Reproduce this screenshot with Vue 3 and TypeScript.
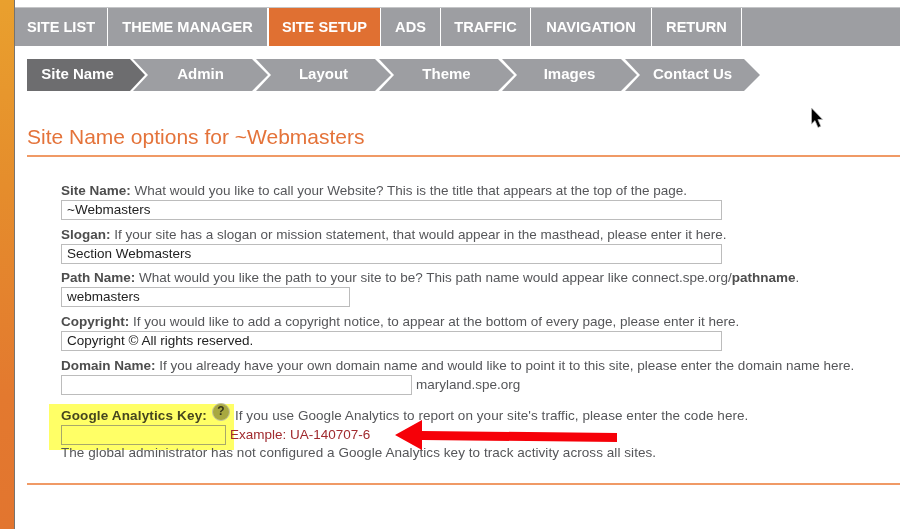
<script setup lang="ts">
interface Field {
  label: string
  help: string
  bold?: string
  value: string
  size: 'long' | 'path' | 'domain'
  after?: string
}

const tabs = [
  { name: 'SITE LIST', cls: 'tab-list' },
  { name: 'THEME MANAGER', cls: 'tab-theme' },
  { name: 'SITE SETUP', cls: 'tab-setup', active: true },
  { name: 'ADS', cls: 'tab-ads' },
  { name: 'TRAFFIC', cls: 'tab-traffic' },
  { name: 'NAVIGATION', cls: 'tab-nav' },
  { name: 'RETURN', cls: 'tab-return' },
]

const steps = ['Site Name', 'Admin', 'Layout', 'Theme', 'Images', 'Contact Us']

const fields: Field[] = [
  {
    label: 'Site Name:',
    help: ' What would you like to call your Website? This is the title that appears at the top of the page.',
    value: '~Webmasters',
    size: 'long',
  },
  {
    label: 'Slogan:',
    help: ' If your site has a slogan or mission statement, that would appear in the masthead, please enter it here.',
    value: 'Section Webmasters',
    size: 'long',
  },
  {
    label: 'Path Name:',
    help: ' What would you like the path to your site to be? This path name would appear like connect.spe.org/',
    bold: 'pathname',
    value: 'webmasters',
    size: 'path',
  },
  {
    label: 'Copyright:',
    help: ' If you would like to add a copyright notice, to appear at the bottom of every page, please enter it here.',
    value: 'Copyright © All rights reserved.',
    size: 'long',
  },
  {
    label: 'Domain Name:',
    help: ' If you already have your own domain name and would like to point it to this site, please enter the domain name here.',
    value: '',
    size: 'domain',
    after: 'maryland.spe.org',
  },
]
</script>

<template>
  <div class="page">
    <div class="strip"></div>
    <main class="content">
      <nav class="tabs">
        <a v-for="t in tabs" :key="t.name" class="tab" :class="[t.cls, { active: t.active }]">{{ t.name }}</a>
      </nav>

      <div class="steps">
        <div v-for="(s, i) in steps" :key="s" class="step" :class="{ first: i === 0 }">{{ s }}</div>
      </div>

      <h1 class="title">Site Name options for ~Webmasters</h1>
      <div class="rule"></div>

      <form class="form">
        <div v-for="f in fields" :key="f.label" class="field">
          <div class="help"><b>{{ f.label }}</b>{{ f.help }}<b v-if="f.bold">{{ f.bold }}</b><template v-if="f.bold">.</template></div>
          <div class="input-row">
            <div class="input" :class="f.size">{{ f.value }}</div>
            <span v-if="f.after" class="after">{{ f.after }}</span>
          </div>
        </div>

        <div class="field analytics">
          <div class="highlight"></div>
          <div class="help ga-help">
            <b>Google Analytics Key:</b>
            <span class="q">?</span>
            <span>If you use Google Analytics to report on your site's traffic, please enter the code here.</span>
          </div>
          <div class="input-row ga-row">
            <div class="input ga-input"></div>
            <span class="example">Example: UA-140707-6</span>
          </div>
          <div class="help ga-note">The global administrator has not configured a Google Analytics key to track activity across all sites.</div>
        </div>
      </form>

      <div class="rule bottom"></div>
    </main>

    <svg class="arrow" width="226" height="34" viewBox="0 0 226 34">
      <path d="M1 15 L28 0 L28 11 L223 13 L223 22 L28 20 L28 30 Z" fill="#f60008" />
    </svg>
    <svg class="cursor" width="16" height="24" viewBox="0 0 16 24">
      <path d="M1.5 1 L1.5 17 L5 13.6 L8 20.5 L10.8 19.2 L7.9 12.6 L12.6 12.4 Z" fill="#000" stroke="#bbb" stroke-width="0.7" />
    </svg>
  </div>
</template>

<style>
html,
body {
  margin: 0;
  background: #fff;
}
</style>

<style scoped>
.page {
  position: relative;
  display: flex;
  width: 900px;
  height: 529px;
  overflow: hidden;
  background: #fff;
  font-family: "Liberation Sans", Arial, sans-serif;
  filter: blur(0.35px);
}

.strip {
  flex: none;
  width: 14px;
  border-right: 1px solid #77736e;
  background: linear-gradient(180deg, #e9a02e 0%, #e58d2c 35%, #e3792f 75%, #e2752f 100%);
}

.content {
  flex: 1;
  min-width: 0;
}

.tabs {
  display: flex;
  height: 39px;
  margin-top: 7px;
  background: #9d9ea2;
  border-top: 1px solid #c4c5c7;
  box-sizing: border-box;
}

.tab {
  display: flex;
  align-items: center;
  justify-content: center;
  box-sizing: border-box;
  border-right: 1px solid #fff;
  color: #fff;
  font-size: 14.6px;
  font-weight: 700;
  white-space: nowrap;
}

.tab-list { width: 93px; }
.tab-theme { width: 161px; border-right-width: 2px; }
.tab-setup { width: 112px; }
.tab-ads { width: 60px; }
.tab-traffic { width: 90px; }
.tab-nav { width: 121px; }
.tab-return { width: 90px; }

.tab.active {
  background: #e07032;
}

.steps {
  display: flex;
  margin: 13px 0 0 12px;
}

.step {
  display: flex;
  align-items: center;
  justify-content: center;
  flex: none;
  box-sizing: border-box;
  width: 135px;
  height: 32px;
  margin-right: -12px;
  padding: 0 12px 3px 12px;
  background: #9d9ea2;
  color: #fff;
  font-size: 15px;
  font-weight: 700;
  clip-path: polygon(0 0, 119px 0, 135px 50%, 119px 100%, 0 100%, 15px 50%);
}

.step.first {
  width: 118px;
  padding: 0 17px 3px 0;
  background: #6d6d6f;
  clip-path: polygon(0 0, 103px 0, 118px 50%, 103px 100%, 0 100%);
}

.title {
  margin: 33px 0 0 12px;
  color: #e4733a;
  font-size: 21px;
  font-weight: 400;
  line-height: 26px;
}

.rule {
  height: 2px;
  margin: 5px 0 0 12px;
  background: #f09a66;
}

.rule.bottom {
  margin-top: 21px;
}

.form {
  padding: 24px 0 0 46px;
}

.field {
  margin-bottom: 4.67px;
}

.help {
  color: #555659;
  font-size: 13.5px;
  line-height: 19px;
  white-space: nowrap;
}

.help b {
  color: #4d4d4d;
}

.input-row {
  display: flex;
  align-items: center;
  gap: 4px;
}

.input {
  box-sizing: border-box;
  height: 20px;
  padding-left: 5px;
  border: 1px solid #bcbcbc;
  background: #fff;
  color: #222;
  font-size: 13.5px;
  line-height: 18px;
}

.input.long {
  width: 661px;
}

.input.path {
  width: 289px;
}

.input.domain {
  width: 351px;
}

.after {
  color: #555659;
  font-size: 13.5px;
}

.analytics {
  position: relative;
  margin-top: 11px;
}

.highlight {
  position: absolute;
  left: -12px;
  top: -2px;
  width: 185px;
  height: 46px;
  background: #ffff66;
}

.ga-help {
  position: relative;
  display: flex;
  align-items: center;
  gap: 5px;
  letter-spacing: 0.06px;
}

.ga-help b {
  color: #45451f;
  letter-spacing: 0.15px;
}

.q {
  display: flex;
  align-items: center;
  justify-content: center;
  flex: none;
  width: 18px;
  height: 18px;
  margin-top: -7px;
  border-radius: 50%;
  border: 1px solid #c2c2a0;
  box-sizing: border-box;
  background: #a8a840;
  color: #36361a;
  font-size: 12px;
  font-weight: 700;
}

.ga-row {
  position: relative;
}

.ga-input {
  width: 165px;
  border-color: #a8a86a;
  background: #ffff66;
}

.example {
  color: #a02a2e;
  font-size: 13.5px;
}

.ga-note {
  position: relative;
  margin-top: -2px;
  letter-spacing: 0.06px;
}

.arrow {
  position: absolute;
  left: 394px;
  top: 420px;
}

.cursor {
  position: absolute;
  left: 810px;
  top: 107px;
}
</style>
